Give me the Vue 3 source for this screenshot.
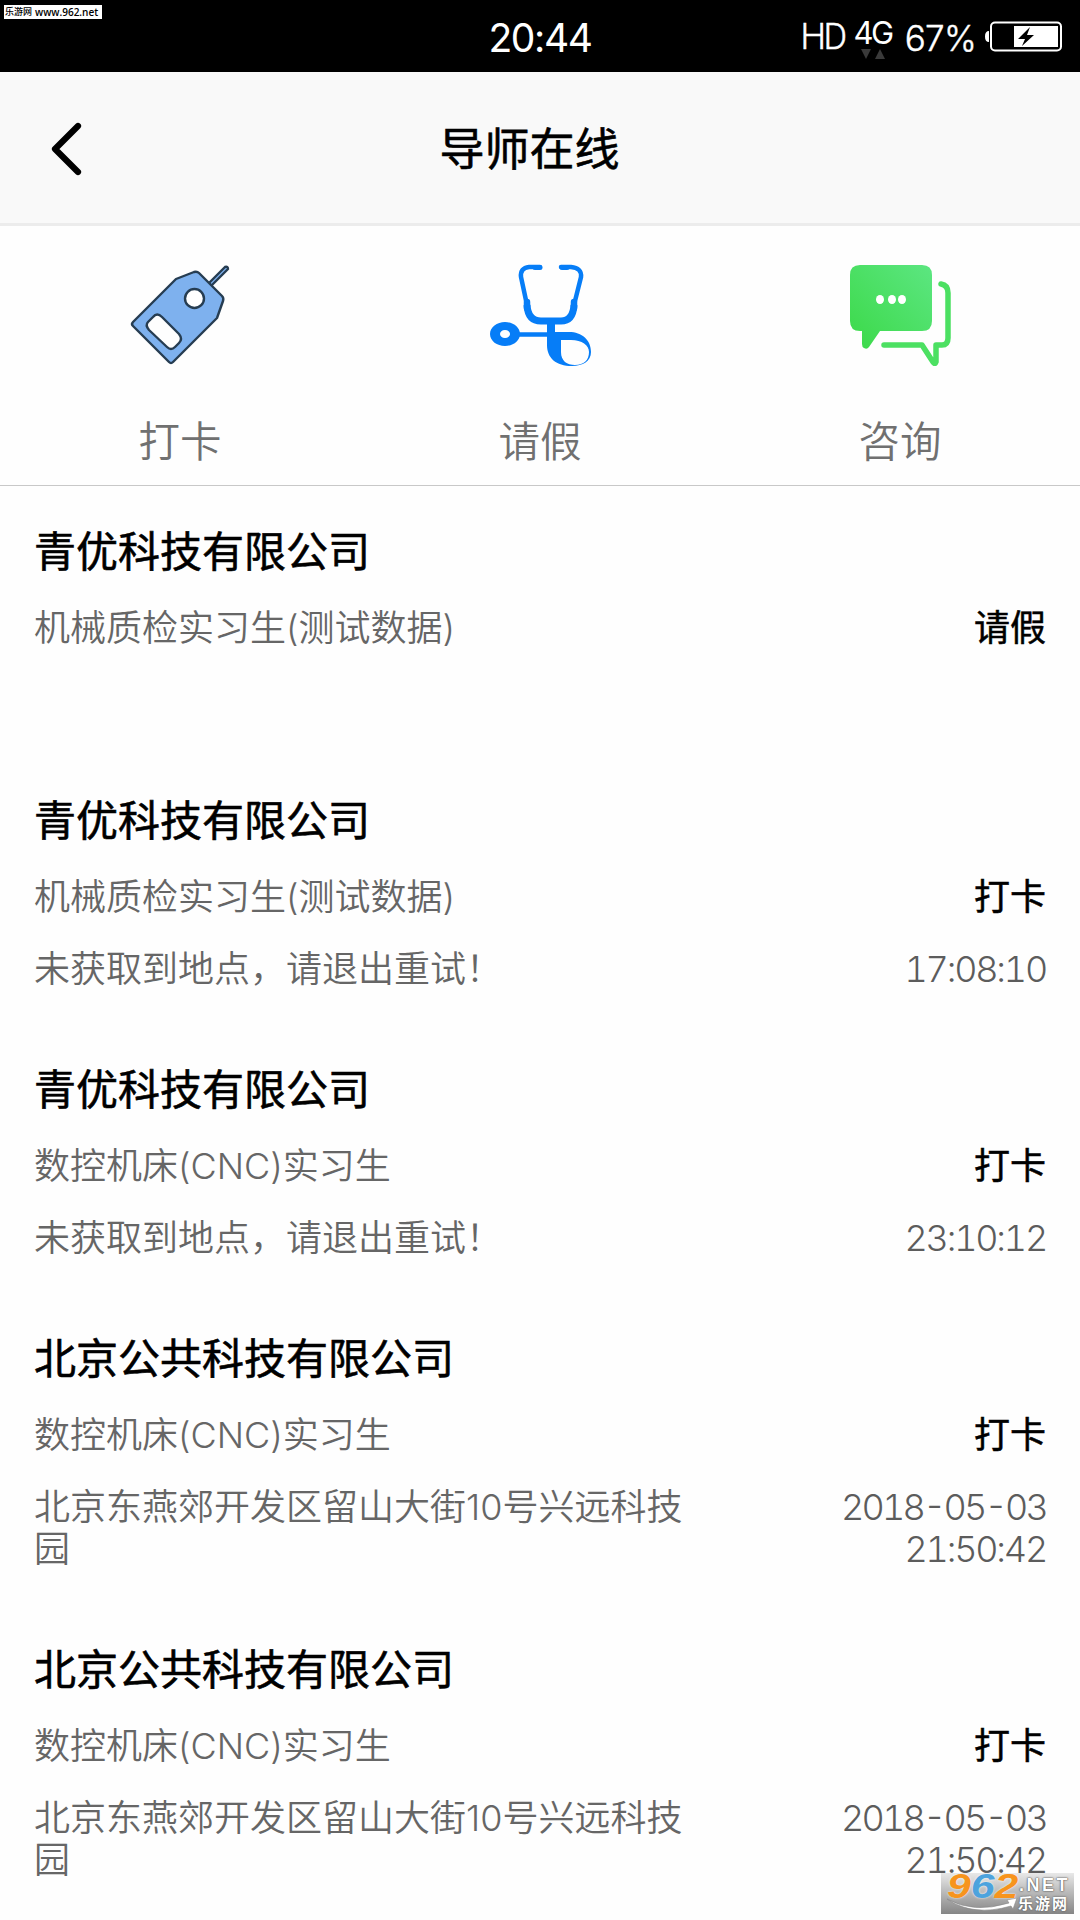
<script setup>
import { ref } from 'vue'

const tabs = [
  { key: 'clock', label: '打卡' },
  { key: 'leave', label: '请假' },
  { key: 'ask', label: '咨询' },
]

const records = ref([
  { id: 1, company: '青优科技有限公司', job: '机械质检实习生(测试数据)', type: '请假', place: '', date: '', time: '' },
  { id: 2, company: '青优科技有限公司', job: '机械质检实习生(测试数据)', type: '打卡', place: '未获取到地点，请退出重试！', date: '', time: '17:08:10' },
  { id: 3, company: '青优科技有限公司', job: '数控机床(CNC)实习生', type: '打卡', place: '未获取到地点，请退出重试！', date: '', time: '23:10:12' },
  { id: 4, company: '北京公共科技有限公司', job: '数控机床(CNC)实习生', type: '打卡', place: '北京东燕郊开发区留山大街10号兴远科技园', date: '2018-05-03', time: '21:50:42' },
  { id: 5, company: '北京公共科技有限公司', job: '数控机床(CNC)实习生', type: '打卡', place: '北京东燕郊开发区留山大街10号兴远科技园', date: '2018-05-03', time: '21:50:42' },
])
</script>

<template>
  <div class="page">
    <div class="status-bar">
      <span class="clock">20:44</span>
      <div class="status-right">
        <span class="hd">HD</span>
        <div class="network">
          <span>4G</span>
          <svg width="24" height="10" viewBox="0 0 24 10" fill="#3a3a3a">
            <path d="M0 0H10L5 10Z" />
            <path d="M14 10H24L19 0Z" />
          </svg>
        </div>
        <span class="percent">67%</span>
        <svg class="battery" width="77" height="31" viewBox="0 0 77 31">
          <path d="M4 10Q0 10 0 15.500T4 21Z" fill="#fff" />
          <rect x="6" y="1.500" width="70" height="28" rx="4" fill="none" stroke="#fff" stroke-width="2" />
          <rect x="29" y="5" width="44" height="21" fill="#fff" />
          <path d="M45 6L33 18H40L37 25L49 14H42Z" fill="#000" />
        </svg>
      </div>
    </div>

    <header class="nav-bar">
      <svg class="back" width="32" height="54" viewBox="0 0 32 54">
        <path d="M27 4L4 27L27 50" fill="none" stroke="#000" stroke-width="6.200" stroke-linecap="round" stroke-linejoin="round" />
      </svg>
      <h1 class="nav-title">导师在线</h1>
    </header>

    <nav class="tabs">
      <div v-for="tab in tabs" :key="tab.key" class="tab">
        <svg v-if="tab.key === 'clock'" class="tab-icon" viewBox="0 0 102 102">
          <g fill="#7eb1ee" stroke="#263d52" stroke-width="2.400" stroke-linejoin="round">
            <path d="M80 19L96 3Q99 2 99 5L82 22Z" />
            <path fill-rule="evenodd" d="M4 58L47 15L65 8Q68 7 70 9L93 32Q95 34 94 37L88 54L44 98Q42 100 40 98L4 62Q2 60 4 58ZM19 58Q16 61 20 66L38 83Q42 87 46 83L50 79Q54 75 50 70L33 53Q28 48 24 53Z" />
            <circle cx="65.500" cy="34.500" r="9.500" fill="#fff" />
          </g>
        </svg>
        <svg v-else-if="tab.key === 'leave'" class="tab-icon" viewBox="0 0 102 102">
          <g fill="none" stroke="#067df7" stroke-linecap="round">
            <path d="M51 3H40Q31 4 32 13L38 41" stroke-width="4.500" />
            <path d="M72 3H82Q93 4 92 13L85 41" stroke-width="4.500" />
            <path d="M46 3.500H51M73 3.500H78" stroke-width="5" />
            <path d="M38 41Q39 57 52 57H72Q84 57 85 41" stroke-width="7" stroke-linecap="butt" />
            <path d="M38 38V44M85 38V44" stroke-width="6.500" />
            <path d="M62 57V75" stroke-width="8" stroke-linecap="butt" />
            <path d="M27 70.500H63" stroke-width="4.500" stroke-linecap="butt" />
          </g>
          <g fill="#067df7" fill-rule="evenodd">
            <path d="M16 58C24 58 31 63 31 70S24 82 16 82S1 77 1 70S8 58 16 58ZM16 66C13 66 11 68 11 70S13 74 16 74S21 72 21 70S19 66 16 66Z" />
            <path d="M58 68H80C93 68 102 76 102 88C102 97 94 102 83 102C67 102 58 94 58 81ZM72 76V88C72 97 78 101 86 101C95 101 100 96 100 88C100 81 93 76 82 76Z" />
          </g>
        </svg>
        <svg v-else class="tab-icon" viewBox="0 0 102 102">
          <defs>
            <linearGradient id="bubble" x1="0" y1="1" x2="1" y2="0">
              <stop offset="0" stop-color="#3bd948" />
              <stop offset="1" stop-color="#5ce681" />
            </linearGradient>
          </defs>
          <path d="M11 1H73Q83 1 83 11V57Q83 67 73 67H31L20 83Q18 86 15 84Q13 83 13 80V67H11Q1 67 1 57V11Q1 1 11 1Z" fill="url(#bubble)" />
          <g fill="#fff">
            <ellipse cx="31" cy="35.500" rx="4" ry="4.500" />
            <ellipse cx="43" cy="35.500" rx="4" ry="4.500" />
            <ellipse cx="53" cy="35.500" rx="4" ry="4.500" />
          </g>
          <path d="M92 20Q99 21 99 29V74Q99 81 93 81H87V98Q86 101 84 98L73 81H35" fill="none" stroke="#4ce062" stroke-width="5.500" stroke-linecap="round" stroke-linejoin="round" />
        </svg>
        <span class="tab-label">{{ tab.label }}</span>
      </div>
    </nav>

    <main class="records">
      <article v-for="item in records" :key="item.id" class="record">
        <h2 class="company">{{ item.company }}</h2>
        <div class="row">
          <span class="job">{{ item.job }}</span>
          <span class="type">{{ item.type }}</span>
        </div>
        <div class="row detail">
          <span class="place">{{ item.place }}</span>
          <div class="when">
            <div v-if="item.date" class="date">{{ item.date }}</div>
            <div v-if="item.time" class="time">{{ item.time }}</div>
          </div>
        </div>
      </article>
    </main>

    <div class="site-tag"><span>乐游网</span><span class="site-url">www.962.net</span></div>

    <div class="site-logo">
      <svg class="swoosh" width="72" height="16" viewBox="0 0 72 16">
        <path d="M0 1Q26 16 62 5L60 2L70 0L66 11L64 8Q26 19 0 1Z" fill="#fff" stroke="#888" stroke-width=".6" />
      </svg>
      <span class="logo-num">9<b class="blue">6</b>2</span>
      <span class="logo-net">.NET</span>
      <span class="logo-name">乐游网</span>
    </div>
  </div>
</template>

<style>
body {
  background: #fff;
}
</style>

<style scoped>
.page {
  position: relative;
  width: 1080px;
  height: 1920px;
  overflow: hidden;
  background: #fefefe;
  color: #000;
  font-family: Inter, 'Noto Sans CJK SC', sans-serif;
}

.status-bar {
  position: relative;
  display: flex;
  align-items: center;
  justify-content: center;
  height: 72px;
  background: #000;
  color: #fff;
}
.clock { font-size: 39px; line-height: 72px; padding-top: 3px; letter-spacing: -1.400px; }
.status-right {
  position: absolute;
  top: 0;
  right: 18px;
  height: 72px;
  display: flex;
  align-items: center;
}
.hd { font-family: Roboto, sans-serif; font-size: 36px; font-weight: 300; letter-spacing: -2.500px; margin-right: 9px; padding-top: 2px; -webkit-text-stroke: .5px #fff; }
.network { display: flex; flex-direction: column; align-items: center; margin-right: 13px; padding-top: 1px; font-size: 31px; letter-spacing: -2.500px; }
.network span { height: 32px; line-height: 36px; }
.network svg { margin-top: 2px; }
.percent { font-size: 35px; font-weight: 300; letter-spacing: -.7px; margin-right: 9px; padding-top: 3px; -webkit-text-stroke: .4px #fff; }

.nav-bar {
  display: flex;
  align-items: center;
  box-sizing: border-box;
  height: 154px;
  padding: 3px 50px 0 51px;
  background: #f9f9f9;
  border-bottom: 3px solid #ececec;
}
.nav-title {
  flex: 1;
  margin: 1px 54px 0 0;
  text-align: center;
  font-size: 45px;
  font-weight: 400;
  line-height: 60px;
  -webkit-text-stroke: .6px #000;
}

.tabs {
  display: flex;
  box-sizing: border-box;
  height: 260px;
  padding-top: 38px;
  border-bottom: 1px solid #c8c8c8;
}
.tab {
  flex: 1;
  display: flex;
  flex-direction: column;
  align-items: center;
}
.tab-icon { width: 102px; height: 102px; margin-right: 1px; }
.tab-label { margin-top: 45px; font-size: 41.500px; line-height: 62px; font-weight: 350; color: #707070; }

.records { padding: 45px 34px 0; }
.record { margin-bottom: 79px; }
.company { margin: 0; font-size: 42px; line-height: 42px; font-weight: 400; -webkit-text-stroke: .6px #000; }
.row {
  display: flex;
  justify-content: space-between;
  margin-top: 34px;
  min-height: 42px;
  font-size: 36px;
  line-height: 42px;
  font-weight: 350;
  color: #666;
}
.detail { margin-top: 30px; }
.type { color: #000; font-weight: 400; -webkit-text-stroke: .5px #000; }
.place { width: 660px; word-break: break-all; }
.when { text-align: right; font-weight: 300; font-variant-numeric: tabular-nums; color: #5c5c5c; }
.date { letter-spacing: -2.800px; font-feature-settings: 'case', 'tnum'; }
.time { letter-spacing: -2.200px; }

.site-tag {
  position: absolute;
  top: 5px;
  left: 4px;
  display: flex;
  align-items: center;
  gap: 3px;
  box-sizing: border-box;
  width: 98px;
  height: 14px;
  padding-left: 1px;
  background: #fff;
  font-size: 9px;
  font-weight: 500;
  line-height: 14px;
  white-space: nowrap;
}
.site-url { font-family: 'Open Sans', sans-serif; font-size: 10px; font-weight: 600; }

.site-logo {
  position: absolute;
  left: 941px;
  top: 1873px;
  width: 133px;
  height: 41px;
  background: linear-gradient(rgba(225, 225, 225, .75), #858585);
  color: #fff;
}
.swoosh { position: absolute; left: 6px; top: 25px; }
.logo-num {
  position: absolute;
  left: 6px;
  top: -4px;
  font-family: 'Liberation Sans', sans-serif;
  font-size: 35px;
  font-weight: 700;
  line-height: 34px;
  font-style: italic;
  color: #f7941d;
  transform: scaleX(1.22);
  transform-origin: left;
  text-shadow: 0 0 2px #fff;
}
.blue { color: #4da3dd; }
.logo-net {
  position: absolute;
  left: 78px;
  top: 3px;
  font-family: 'Liberation Sans', sans-serif;
  font-size: 18px;
  line-height: 18px;
  font-weight: 700;
  letter-spacing: 2.500px;
  text-shadow: 0 0 2px #444, 0 0 1px #444;
}
.logo-name {
  position: absolute;
  left: 77px;
  top: 22px;
  font-size: 15px;
  line-height: 18px;
  font-weight: 700;
  letter-spacing: 2px;
  text-shadow: 0 0 2px #444;
  white-space: nowrap;
}
</style>
